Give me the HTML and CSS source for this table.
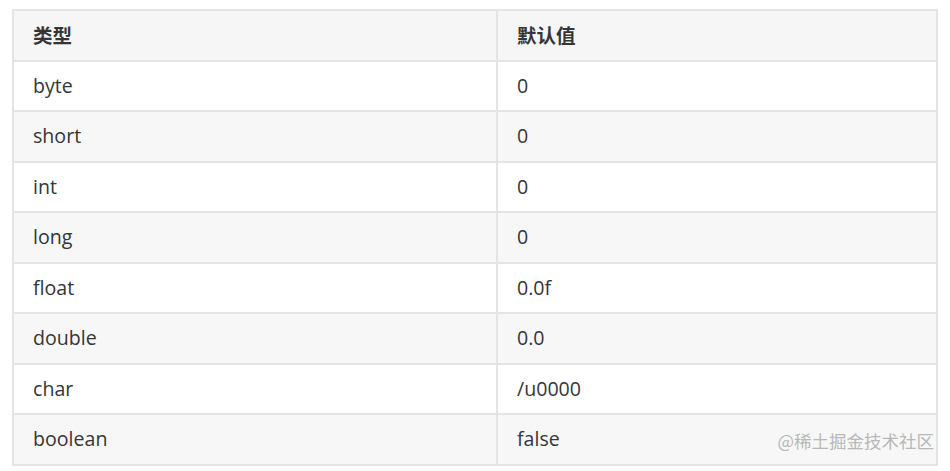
FILE: index.html
```html
<!DOCTYPE html>
<html lang="zh">
<head>
<meta charset="utf-8">
<link rel="stylesheet" href="styles.css">
</head>
<body>
<div class="wrap">
<table class="tbl">
<thead>
<tr><th class="c1">类型</th><th>默认值</th></tr>
</thead>
<tbody>
<tr><td>byte</td><td>0</td></tr>
<tr><td>short</td><td>0</td></tr>
<tr><td>int</td><td>0</td></tr>
<tr><td>long</td><td>0</td></tr>
<tr><td>float</td><td>0.0f</td></tr>
<tr><td>double</td><td>0.0</td></tr>
<tr><td>char</td><td>/u0000</td></tr>
<tr><td>boolean</td><td>false</td></tr>
</tbody>
</table>
<div class="mark">@稀土掘金技术社区</div>
</div>
</body>
</html>
```
FILE: styles.css
```css
html, body {
  margin: 0;
  padding: 0;
  background: #ffffff;
}
body {
  font-family: "Open Sans", "Noto Sans CJK SC", sans-serif;
  color: #353535;
}
.wrap {
  position: relative;
  padding: 9px 12px 0 12px;
  width: 926px;
}
.tbl {
  border-collapse: collapse;
  width: 926px;
  font-size: 19.6px;
}
.tbl th, .tbl td {
  border: 2px solid #e4e4e4;
  padding: 0 19px;
  height: 48.5px;
  text-align: left;
  line-height: 24px;
}
.tbl th {
  background: #f6f6f6;
  font-weight: 700;
  font-family: "Noto Sans CJK SC", sans-serif;
  font-size: 19.5px;
}
.tbl .c1 {
  width: 444px;
}
.tbl tbody tr:nth-child(even) td {
  background: #f7f7f7;
}
.mark {
  position: absolute;
  right: 16px;
  top: 430px;
  font-family: "Noto Sans CJK SC", sans-serif;
  font-size: 17.5px;
  line-height: 22px;
  color: #b8b8b8;
}
```
